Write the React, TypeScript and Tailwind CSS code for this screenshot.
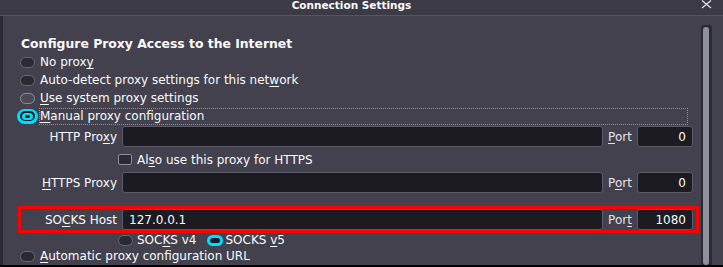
import React from "react";

function Radio({ state = "off" }: { state?: "off" | "hover" | "on" }) {
  if (state === "on") {
    return (
      <span className="w-[21px] h-[15px] rounded-full bg-[#00ddff] flex items-center justify-center">
        <span className="w-[15px] h-[10px] rounded-full bg-[#1c1b22] flex items-center justify-center">
          <span className="w-[11px] h-[7px] rounded-full bg-[#00ddff] flex items-center justify-center">
            <span className="w-[5px] h-[3px] rounded-full bg-[#1c1b22]" />
          </span>
        </span>
      </span>
    );
  }
  if (state === "hover") {
    return <span className="w-[15px] h-[11px] rounded-full bg-[#4a4954] border border-[#8f8f9d]" />;
  }
  return <span className="w-[15px] h-[11px] rounded-full bg-[#2b2a33] border border-[#6a6974]" />;
}

function U({ children }: { children: React.ReactNode }) {
  return <span className="underline underline-offset-2 decoration-1">{children}</span>;
}

function RadioRow({ state, children }: { state?: "off" | "hover" | "on"; children: React.ReactNode }) {
  return (
    <div className="h-[18px] flex items-center">
      <span className="w-[21px] flex justify-center">
        <Radio state={state} />
      </span>
      <span className="ml-[2px]">{children}</span>
    </div>
  );
}

function Field({
  label,
  value,
  port,
  portLabel,
  labelW = "w-[100px]",
}: {
  label: React.ReactNode;
  value: string;
  port: string;
  portLabel: React.ReactNode;
  labelW?: string;
}) {
  return (
    <div className="flex items-center">
      <span className={`${labelW} text-right`}>{label}</span>
      <div className="ml-[5px] w-[481px] h-[21px] rounded-[3px] bg-[#1c1b22] border border-[#5b5a66] flex items-center pl-[6px]">
        {value}
      </div>
      <span className="w-[34px] text-center text-[#e4e4ea]">{portLabel}</span>
      <div className="w-[56px] h-[21px] rounded-[3px] bg-[#1c1b22] border border-[#5b5a66] flex items-center justify-end pr-[6px]">
        {port}
      </div>
    </div>
  );
}

export default function App() {
  return (
    <div className="w-[723px] h-[267px] overflow-hidden bg-[#42414d] flex flex-col text-[12px] text-[#fbfbfe] font-['DejaVu_Sans',sans-serif]">
      <div className="h-[16px] shrink-0 bg-[#3b3a45] border-b border-[#55545f] flex items-start">
        <div className="w-[701px] pl-[2px] text-center font-bold text-[10.5px] leading-[10px]">Connection Settings</div>
        <svg width="11" height="9" viewBox="0 0 11 9">
          <path d="M1 0.5 L10 8 M10 0.5 L1 8" stroke="#e8e8ee" strokeWidth="1.1" fill="none" />
        </svg>
      </div>

      <div className="flex-1 flex min-h-0">
        <div className="w-[3px] bg-[#2b2a33]" />
        <div className="flex-1 pl-[14px] flex flex-col">
          <div className="mt-[19px] h-[18px] leading-[18px] pl-[4px] font-bold text-[12.4px]">
            Configure Proxy Access to the Internet
          </div>
          <RadioRow>
            No prox<U>y</U>
          </RadioRow>
          <RadioRow>
            Auto-detect proxy settings for this net<U>w</U>ork
          </RadioRow>
          <RadioRow state="hover">
            <U>U</U>se system proxy settings
          </RadioRow>
          <div className="h-[18px] flex items-center">
            <span className="w-[21px] flex justify-center">
              <Radio state="on" />
            </span>
            <span className="ml-[1px] mr-[13px] flex-1 h-[17px] border border-dotted border-[#8f8f9d] flex items-center">
              <U>M</U>anual proxy configuration
            </span>
          </div>

          <div className="h-[23px] flex items-center">
            <Field
              label={
                <>
                  HTTP Pro<U>x</U>y
                </>
              }
              value=""
              port="0"
              portLabel={
                <>
                  <U>P</U>ort
                </>
              }
            />
          </div>
          <div className="h-[23px] flex items-center pl-[101px]">
            <span className="w-[14px] h-[11px] rounded-[2px] bg-[#2b2a33] border border-[#8f8f9d]" />
            <span className="ml-[5px]">
              Al<U>s</U>o use this proxy for HTTPS
            </span>
          </div>
          <div className="h-[23px] flex items-center">
            <Field
              label={
                <>
                  <U>H</U>TTPS Proxy
                </>
              }
              value=""
              port="0"
              portLabel={
                <>
                  P<U>o</U>rt
                </>
              }
            />
          </div>

          <div className="mt-[12px] ml-[1px] w-[681px] h-[27px] border-[3px] border-[#ff0000] flex items-center">
            <Field
              labelW="w-[96px]"
              label={
                <>
                  SO<U>C</U>KS Host
                </>
              }
              value="127.0.0.1"
              port="1080"
              portLabel={
                <>
                  Por<U>t</U>
                </>
              }
            />
          </div>

          <div className="h-[14px] flex items-center pl-[101px]">
            <Radio />
            <span className="ml-[4px]">
              SOC<U>K</U>S v4
            </span>
            <span className="ml-[10px] w-[16px] h-[11px] rounded-full border-[3px] border-[#00ddff] bg-[#1c1b22]" />
            <span className="ml-[3px]">
              SOCKS <U>v</U>5
            </span>
          </div>
          <RadioRow>
            <U>A</U>utomatic proxy configuration URL
          </RadioRow>
        </div>
        <div className="w-[11px] mt-[9px] bg-[#2b2a33] rounded-t-[3px] pt-[2px] pl-[2px]">
          <div className="w-[6px] h-full rounded-full bg-[#8f8f9d]" />
        </div>
        <div className="w-[11px]" />
      </div>
      <div className="h-[2px] shrink-0 bg-black" />
    </div>
  );
}
